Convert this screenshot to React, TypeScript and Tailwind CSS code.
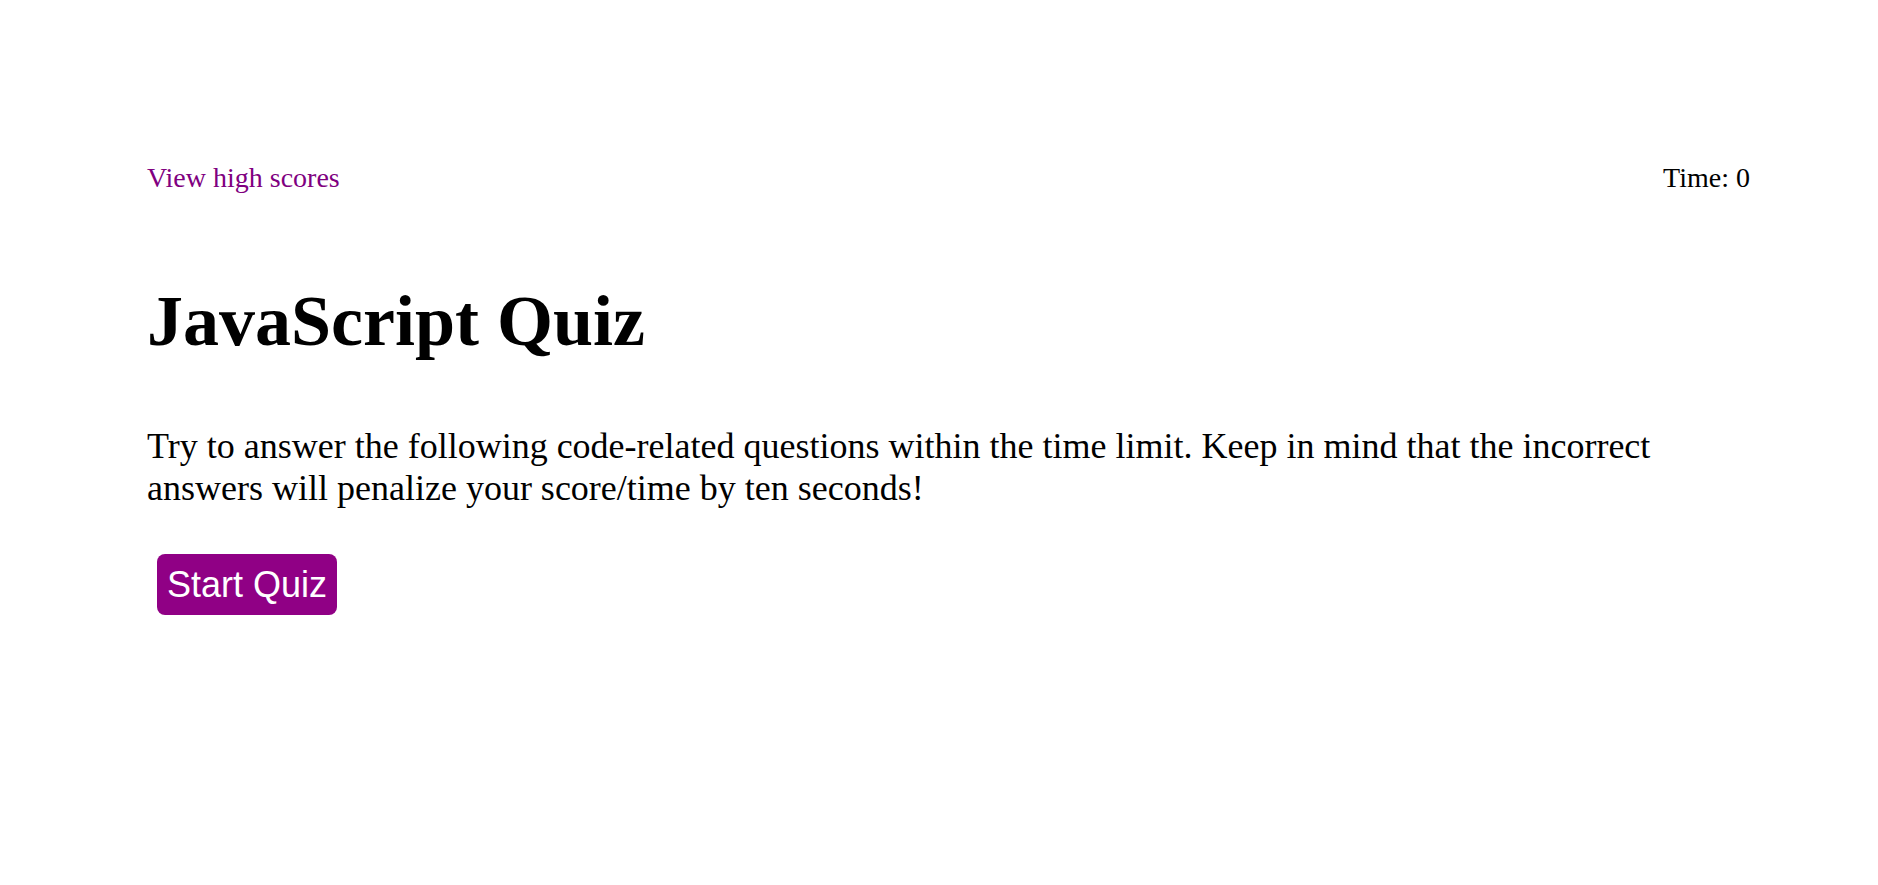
import React from 'react';

export default function App() {
  return (
    <div className="min-h-screen bg-white font-['Liberation_Serif',serif] text-black pl-[147px] pr-[128px] pt-[162px]">
      {/* Top bar */}
      <header className="flex items-start justify-between text-[28px] leading-[32px]">
        <a href="#" className="text-[#800080]">
          View high scores
        </a>
        <span>Time: 0</span>
      </header>

      {/* Intro */}
      <main>
        <h1 className="mt-[86px] text-[72px] font-bold leading-[83px]">JavaScript Quiz</h1>
        <p className="mt-[63px] text-[36px] leading-[41.5px]">
          Try to answer the following code-related questions within the time limit. Keep in mind that the incorrect
          answers will penalize your score/time by ten seconds!
        </p>
        <button className="mt-[45px] ml-[10px] h-[61px] w-[180px] rounded-[8px] bg-[#900085] font-['Liberation_Sans',sans-serif] text-[36px] leading-none text-white">
          Start Quiz
        </button>
      </main>
    </div>
  );
}
